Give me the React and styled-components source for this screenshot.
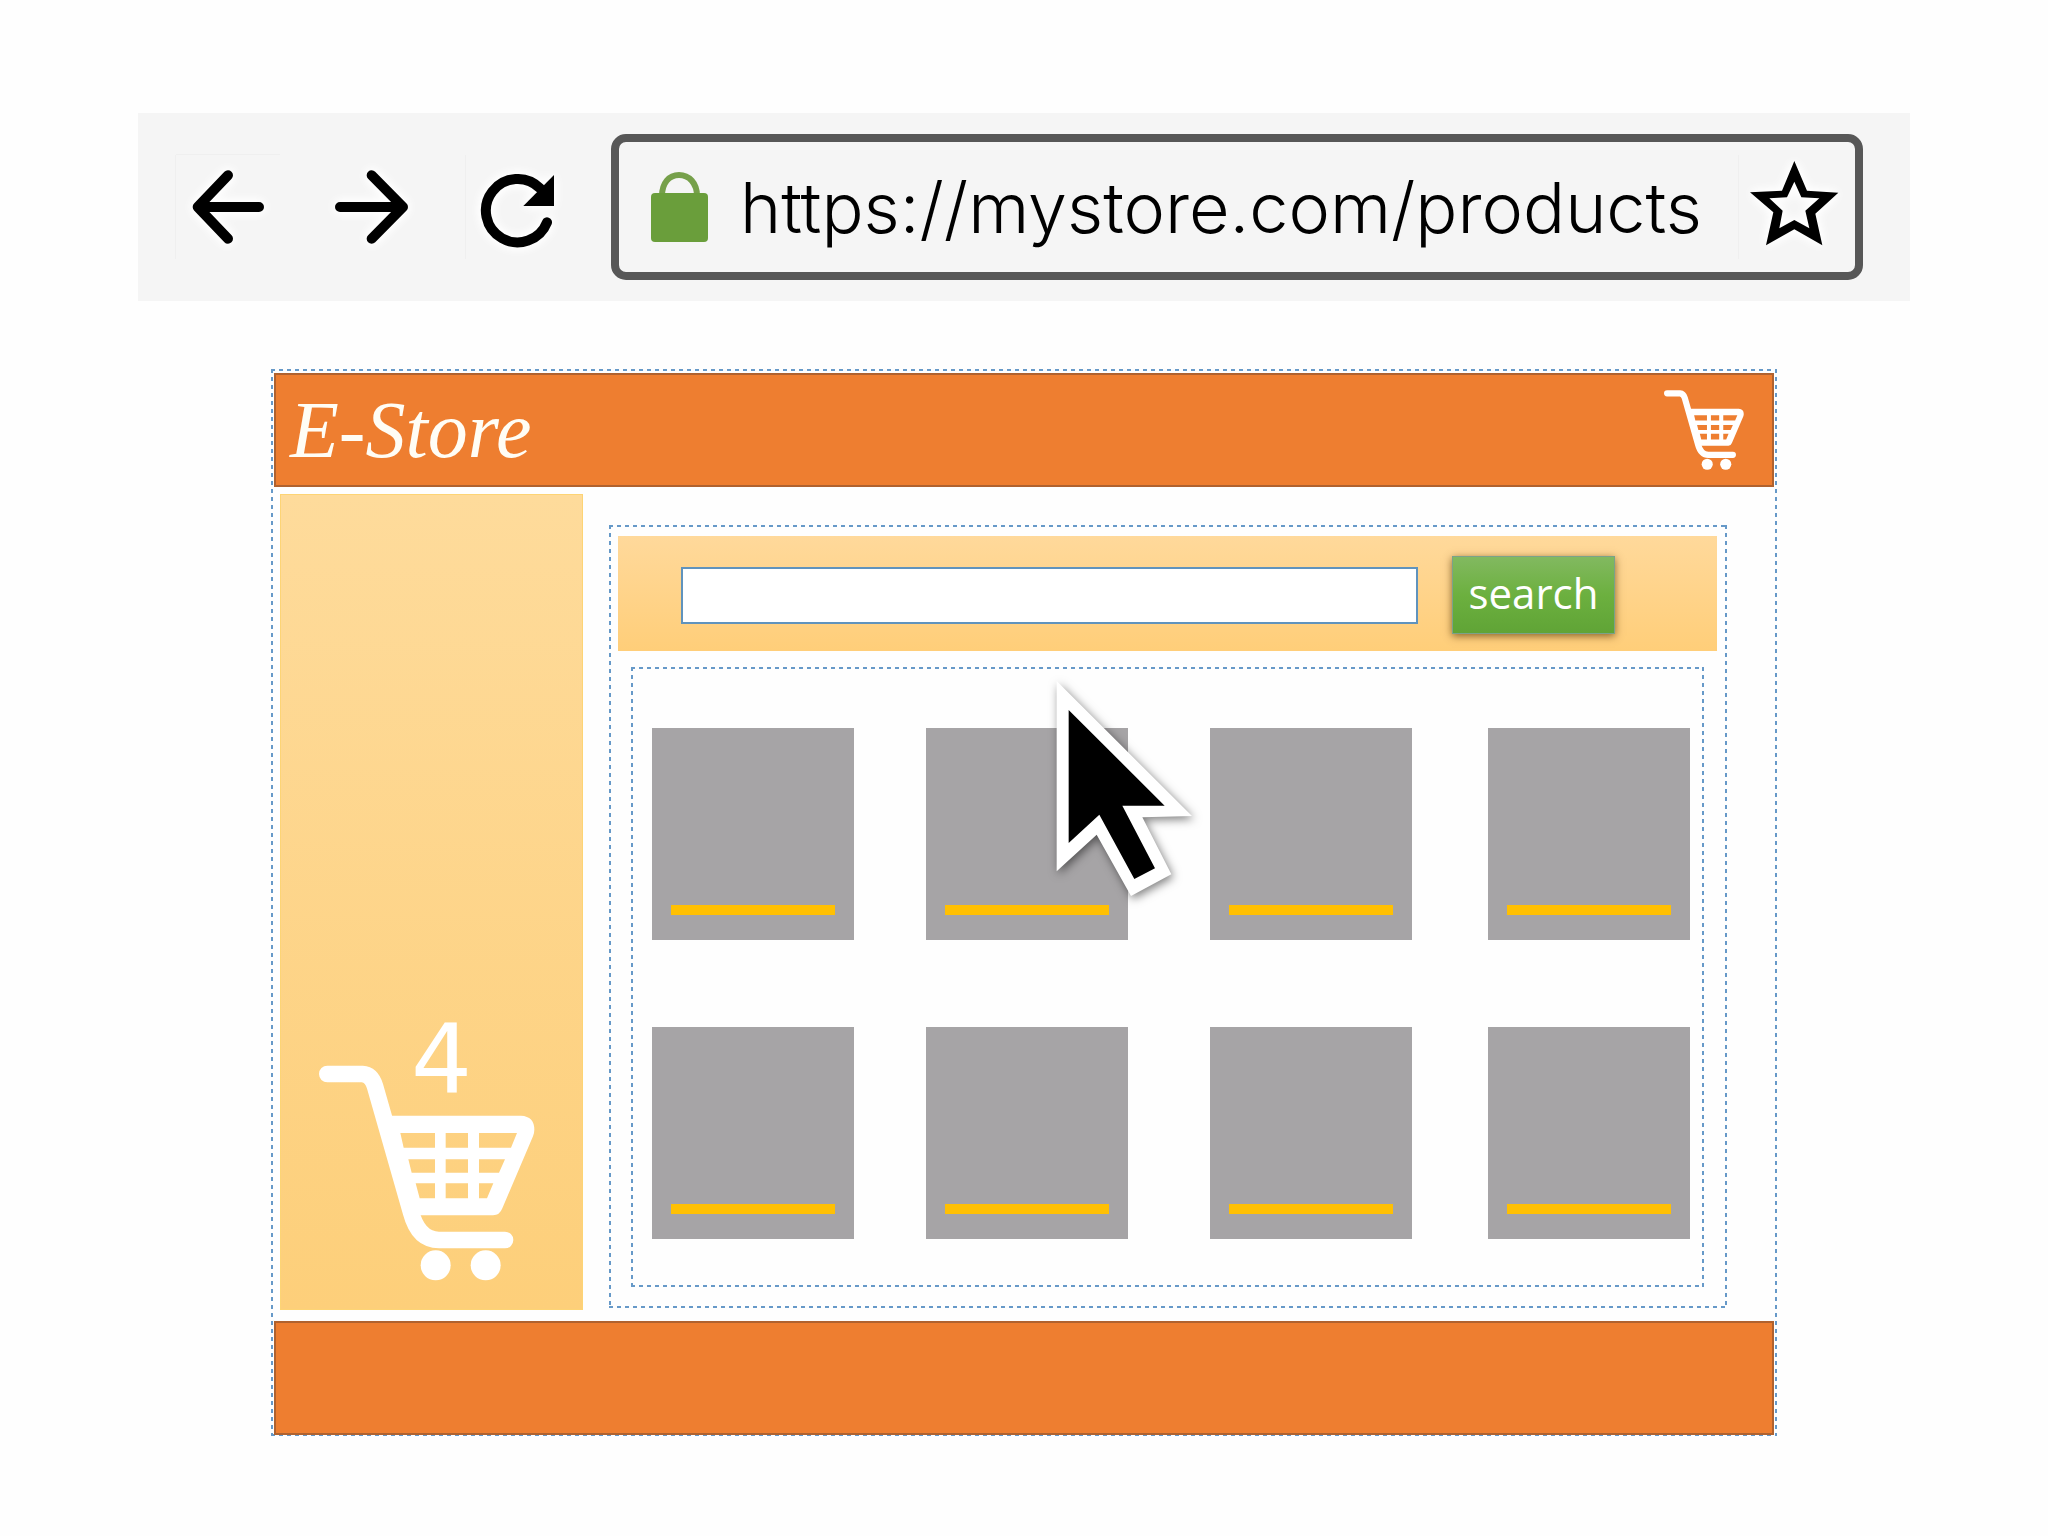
import React from 'react';
import styled, { createGlobalStyle, css } from 'styled-components';

const products = [1, 2, 3, 4, 5, 6, 7, 8];

const App = () => {
    return (
        <>
            <GlobalStyle/>
            <Page>
                <BrowserBar>
                    <IconButton aria-label="Back" $top $left>
                        <svg viewBox="0 0 312 312">
                            <path d="M156 61L65 156L156 251M75 156H249"/>
                        </svg>
                    </IconButton>
                    <IconButton aria-label="Forward">
                        <svg viewBox="0 0 312 312">
                            <path d="M152 61L246 156L152 251M57 156H236"/>
                        </svg>
                    </IconButton>
                    <IconButton aria-label="Reload" $left>
                        <svg viewBox="0 0 312 312">
                            <path d="M222 100A95 95 0 1 0 243 202"/>
                            <polygon points="264,60 264,153 172,153"/>
                        </svg>
                    </IconButton>
                    <Address>
                        <Lock/>
                        <AddressInput aria-label="Address" defaultValue="https://mystore.com/products"/>
                        <IconButton aria-label="Bookmark" $left>
                            <svg viewBox="0 0 312 312">
                                <polygon
                                    fillRule="evenodd"
                                    points="166,18 204,107 298,113 229,176 250,271 166,223 81,271 103,172 33,112 129,107 166,18 166,80 144,127 91,130 131,167 121,220 166,195 211,220 199,167 241,130 187,127 166,80"
                                />
                            </svg>
                        </IconButton>
                    </Address>
                </BrowserBar>
                <Store>
                    <Header>
                        <Logo>E-Store</Logo>
                        <HeaderCart href="#cart" aria-label="Cart">
                            <CartIcon/>
                        </HeaderCart>
                    </Header>
                    <Body>
                        <Sidebar>
                            <CartCounter>
                                <CartIcon/>
                                <Count>4</Count>
                            </CartCounter>
                        </Sidebar>
                        <Main>
                            <SearchBar onSubmit={(e) => e.preventDefault()}>
                                <SearchInput type="text" aria-label="Search products"/>
                                <SearchButton type="submit">search</SearchButton>
                            </SearchBar>
                            <ProductGrid>
                                {products.map((id) => (
                                    <Product key={id}>
                                        <PriceBar/>
                                    </Product>
                                ))}
                                <Pointer/>
                            </ProductGrid>
                        </Main>
                    </Body>
                    <Footer/>
                </Store>
            </Page>
        </>
    );
}

const CartIcon = () => (
    <svg viewBox="160 198 648 648" fill="#fff" aria-hidden="true">
        <path
            d="M185 225H290Q318 227 328 262L436 640Q458 723 520 723H718"
            fill="none"
            stroke="#fff"
            strokeWidth="50"
            strokeLinecap="round"
        />
        <path
            fillRule="evenodd"
            d="M350 350H766Q806 352 806 392Q806 402 802 412L710 628Q702 649 682 649H440Z
            M404 402H508V446H414Z M540 402H607V446H540Z M640 402H754L736 446H640Z
            M428 481H508V521H438Z M540 481H607V521H540Z M640 481H718L700 521H640Z
            M450 553H508V598H462Z M540 553H607V598H540Z M640 553H683L664 598H640Z"
        />
        <circle cx="510" cy="799" r="45"/>
        <circle cx="660" cy="799" r="45"/>
    </svg>
);

const Lock = () => (
    <LockIcon viewBox="0 0 57 70" aria-hidden="true">
        <path d="M11 24C11 11 18 3 28 3S46 11 46 24" fill="none" stroke="#76a04a" strokeWidth="6"/>
        <rect y="21" width="57" height="49" rx="4" fill="#6a9e3b"/>
    </LockIcon>
);

const Pointer = () => (
    <PointerIcon viewBox="60 60 450 660" aria-hidden="true">
        <polygon points="80,63 486,468 337,472 424,643 303,708 200,524 80,634" fill="#fff"/>
        <polygon points="116,150 404,437 277,437 375,625 313,657 208,464 116,549" fill="#000"/>
    </PointerIcon>
);

const GlobalStyle = createGlobalStyle`
    *{
        box-sizing: border-box;
    }
    body{
        margin: 0;
        background: #fefefe;
    }
    svg{
        display: block;
    }
`

// 4px dashes on an 8px step, along all four sides
const dashedFrame = css`
    background-image:
        repeating-linear-gradient(90deg, #6699c8 0 4px, transparent 4px 8px),
        repeating-linear-gradient(90deg, #6699c8 0 4px, transparent 4px 8px),
        repeating-linear-gradient(180deg, #6699c8 0 4px, transparent 4px 8px),
        repeating-linear-gradient(180deg, #6699c8 0 4px, transparent 4px 8px);
    background-position: top, bottom, left, right;
    background-size: 100% 2px, 100% 2px, 2px 100%, 2px 100%;
    background-repeat: no-repeat;
`

const Page = styled.div`
    padding: 113px 138px 100px;
`

const BrowserBar = styled.nav`
    display: flex;
    align-items: center;
    gap: 41px;
    padding: 21px 47px 21px 38px;
    background: #f5f5f5;
`

const IconButton = styled.button`
    flex: none;
    width: 104px;
    height: 104px;
    padding: 0;
    border: 0;
    background: none;
    box-shadow: ${(props) => props.$left ? '-1px 0 #efefef' : 'none'}${(props) => props.$top ? ', 0 -1px #efefef' : ''};
    svg{
        width: 104px;
        height: 104px;
        filter: drop-shadow(0 0 5px #fff) drop-shadow(0 0 4px #fff);
    }
    path{
        fill: none;
        stroke: #000;
        stroke-width: 30;
        stroke-linecap: round;
        stroke-linejoin: round;
    }
`

const Address = styled.div`
    flex: 1;
    display: flex;
    align-items: center;
    min-width: 0;
    height: 146px;
    padding: 0 12px 0 32px;
    border: 8px solid #575757;
    border-radius: 15px;
`

const LockIcon = styled.svg`
    flex: none;
    width: 57px;
    height: 70px;
`

const AddressInput = styled.input`
    flex: 1;
    min-width: 0;
    height: 104px;
    margin-left: 32px;
    padding: 0;
    border: 0;
    outline: 0;
    background: none;
    color: #000;
    font-family: 'Inter', 'Liberation Sans', sans-serif;
    font-size: 70px;
    font-weight: 300;
`

const Store = styled.div`
    ${dashedFrame}
    margin: 68px 133px 0;
    padding: 4px 3px 1px;
`

const Header = styled.header`
    display: flex;
    align-items: center;
    justify-content: space-between;
    height: 114px;
    padding: 0 28px 0 14px;
    border: 2px solid #b0622f;
    background: #ee7e30;
`

const Logo = styled.h1`
    margin: 0;
    color: #fffdf5;
    font-family: 'Snell Roundhand', 'Liberation Serif', serif;
    font-size: 80px;
    font-style: italic;
    font-weight: 400;
    line-height: 104px;
`

const HeaderCart = styled.a`
    width: 80px;
`

const Body = styled.div`
    display: flex;
    padding: 7px 47px 11px 6px;
`

const Sidebar = styled.aside`
    flex: none;
    display: flex;
    align-items: flex-end;
    width: 303px;
    padding: 0 0 28px 38px;
    border: 1px solid #fdd475;
    background: linear-gradient(#fedb9b, #fdcf7a);
`

const CartCounter = styled.div`
    position: relative;
    width: 216px;
`

const Count = styled.span`
    position: absolute;
    top: -53px;
    left: 92px;
    color: #fff;
    font-family: 'DejaVu Sans', sans-serif;
    font-size: 96px;
    line-height: 96px;
`

const Main = styled.main`
    ${dashedFrame}
    flex: 1;
    min-width: 0;
    margin: 31px 0 2px 26px;
    padding: 11px 10px 21px 9px;
`

const SearchBar = styled.form`
    display: flex;
    align-items: center;
    gap: 34px;
    height: 115px;
    padding: 3px 102px 0 63px;
    background: linear-gradient(#ffd99b, #ffce79);
`

const SearchInput = styled.input`
    flex: 1;
    min-width: 0;
    height: 57px;
    padding: 0 12px;
    border: 2px solid #6093bd;
    outline: 0;
    background: #fff;
    font-family: 'Open Sans', sans-serif;
    font-size: 32px;
`

const SearchButton = styled.button`
    width: 163px;
    height: 78px;
    padding: 0 0 4px;
    border: 1px solid #7ba289;
    background: linear-gradient(#82b960, #6cb03f 50%, #60a436);
    box-shadow: 0 2px 8px rgba(80, 50, 0, 0.7);
    color: #fff;
    font-family: 'Trebuchet MS', 'Open Sans', sans-serif;
    font-size: 42px;
    line-height: 56px;
`

const ProductGrid = styled.section`
    ${dashedFrame}
    position: relative;
    display: grid;
    grid-template-columns: 274fr 284fr 278fr 202fr;
    row-gap: 87px;
    margin: 16px 13px 0;
    padding: 61px 14px 48px 21px;
`

const Product = styled.article`
    display: flex;
    align-items: flex-end;
    width: 202px;
    height: 212px;
    padding: 0 19px 25px;
    background: #a6a4a6;
`

const PriceBar = styled.div`
    flex: 1;
    height: 10px;
    background: #ffc003;
`

const PointerIcon = styled.svg`
    position: absolute;
    top: 13px;
    left: 419px;
    width: 150px;
    height: 220px;
    overflow: visible;
    filter: drop-shadow(2px 3px 5px rgba(0, 0, 0, 0.5));
`

const Footer = styled.footer`
    height: 114px;
    border: 2px solid #b0622f;
    background: #ee7e30;
`

export default App;
